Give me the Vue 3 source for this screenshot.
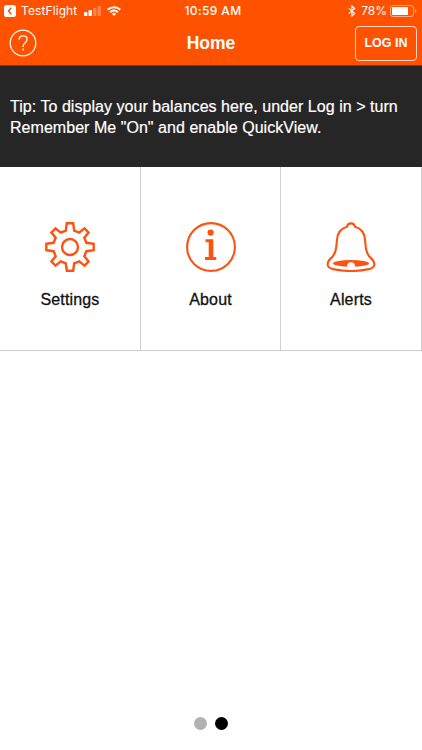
<template>
  <div class="screen">
    <header class="top">
      <div class="status-bar">
        <div class="status-left">
          <svg class="back" viewBox="0 0 12 12">
            <rect width="12" height="12" rx="2.5" fill="#fff" />
            <path d="M7.3 2.8 4.4 6l2.9 3.2" fill="none" stroke="#ff5200" stroke-width="1.4" />
          </svg>
          <span class="carrier">TestFlight</span>
          <svg class="signal" viewBox="0 0 17 10">
            <rect x="0" y="6" width="3.4" height="4" rx=".7" fill="#fff" />
            <rect x="4.5" y="4" width="3.4" height="6" rx=".7" fill="#fff" />
            <rect x="9" y="2" width="3.4" height="8" rx=".7" fill="#fff" opacity=".3" />
            <rect x="13.5" y="0" width="3.4" height="10" rx=".7" fill="#fff" opacity=".3" />
          </svg>
          <svg class="wifi" viewBox="0 0 14 10">
            <g fill="none" stroke="#fff" stroke-width="2">
              <path d="M.7 3.7a9 9 0 0 1 12.6 0" />
              <path d="M3.1 6.2a5.6 5.6 0 0 1 7.8 0" />
            </g>
            <path d="M7 10 4.9 7.8a3 3 0 0 1 4.2 0z" fill="#fff" />
          </svg>
        </div>
        <span class="clock">10:59 AM</span>
        <div class="status-right">
          <svg class="bluetooth" viewBox="0 0 8 12">
            <path d="M.8 3.3 6.7 8.5 3.9 11.1V.9l2.8 2.6L.8 8.7" fill="none" stroke="#fff" stroke-width="1.1" />
          </svg>
          <span class="percent">78%</span>
          <svg class="battery" viewBox="0 0 27 12">
            <rect x=".5" y=".5" width="23" height="11" rx="2.5" fill="none" stroke="#fff" opacity=".5" />
            <rect x="2" y="2" width="16" height="8" rx="1" fill="#fff" />
            <path d="M25 4v4c1.9-.7 1.9-3.3 0-4z" fill="#fff" opacity=".5" />
          </svg>
        </div>
      </div>

      <div class="nav-bar">
        <button class="help" aria-label="Help">
          <svg viewBox="0 0 28 28" fill="none" stroke="#fff">
            <circle cx="14" cy="14" r="12.8" stroke-width="1.2" />
            <path d="M10.1 10.6c.1-2.5 1.7-3.8 4-3.8 2.4 0 4 1.4 4 3.5 0 3.4-4 3.5-4 7v.6" stroke-width="1.3" />
            <path d="M14.1 19.6v1.8" stroke-width="1.5" />
          </svg>
        </button>
        <h1>Home</h1>
        <button class="login">LOG IN</button>
      </div>
    </header>

    <section class="tip">
      <p>Tip: To display your balances here, under Log in &gt; turn<br>Remember Me "On" and enable QuickView.</p>
    </section>

    <nav class="tiles">
      <a v-for="tile in tiles" :key="tile.name" class="tile">
        <svg v-if="tile.name === 'settings'" class="icon" viewBox="0 0 50 50">
          <g fill="none" stroke="#fb5312" stroke-width="2.4">
            <path d="M21.8 1.3h6.4l1 7.3 5 2.1 5.3-4.3 4.1 4.1-4.3 5.3 2.1 5 7.3 1v6.4l-7.3 1-2.1 5 4.3 5.3-4.1 4.1-5.3-4.3-5 2.1-1 7.3h-6.4l-1-7.3-5-2.1-5.3 4.3-4.1-4.1 4.3-5.3-2.1-5-7.3-1v-6.400l7.3-1 2.1-5-4.300-5.300 4.100-4.100 5.300 4.300 5-2.100z" />
            <circle cx="25" cy="25" r="8" />
          </g>
        </svg>
        <svg v-else-if="tile.name === 'about'" class="icon" viewBox="0 0 50 50">
          <circle cx="25" cy="25" r="23.9" fill="none" stroke="#fb5312" stroke-width="2.1" />
          <circle cx="24.6" cy="10.6" r="3.1" fill="#fb5312" />
          <path d="M19.6 17.2h7.7V35h3v3H19v-3h3.700V20.200h-3.100z" fill="#fb5312" />
        </svg>
        <svg v-else class="icon" viewBox="0 0 50 50">
          <path d="M21 4.7C22 .3 28 .3 29 4.7c6.5 1.7 9.6 6.7 10.1 13.4.5 8 1.1 13.7 5.6 17.8 2.5 2.2 3.9 4.2 3.6 7.1-.3 3-3.1 3.7-6.5 4.4-10.8 2.1-22.8 2.1-33.6 0-3.4-.7-6.2-1.4-6.5-4.4-.3-2.9 1.1-4.9 3.6-7.1 4.5-4.1 5.1-9.8 5.600-17.800C11.400 11.400 14.500 6.400 21 4.700z" fill="none" stroke="#fb5312" stroke-width="2.1" />
          <ellipse cx="25" cy="41.4" rx="18" ry="3.3" fill="#fb5312" />
          <circle cx="25" cy="44.2" r="3.9" fill="#fff" />
        </svg>
        <span class="label">{{ tile.label }}</span>
      </a>
    </nav>

    <div class="pager">
      <span v-for="n in 2" :key="n" class="dot" :class="{ active: n === page }"></span>
    </div>
  </div>
</template>

<script setup>
import { ref } from 'vue'

const page = ref(2)

const tiles = [
  { name: 'settings', label: 'Settings' },
  { name: 'about', label: 'About' },
  { name: 'alerts', label: 'Alerts' }
]
</script>

<style>
body {
  margin: 0;
  background: #fff;
}
</style>

<style scoped>
.screen {
  display: flex;
  flex-direction: column;
  height: 750px;
  background: #fff;
  font-family: "Liberation Sans", Arial, sans-serif;
  overflow: hidden;
}

.top {
  height: 66px;
  box-sizing: border-box;
  background: #ff5200;
  border-bottom: 1px solid #7a3517;
  color: #fff;
}

.status-bar {
  display: grid;
  grid-template-columns: 1fr auto 1fr;
  align-items: center;
  height: 22px;
  padding: 0 5px 0 4px;
  font-family: Inter, sans-serif;
  font-size: 12px;
  line-height: 22px;
}

.status-left,
.status-right {
  display: flex;
  align-items: center;
}

.status-right {
  justify-content: flex-end;
}

.back {
  width: 12px;
  height: 12px;
}

.carrier {
  width: 57px;
  margin-left: 5px;
  letter-spacing: 0.1px;
  white-space: nowrap;
}

.signal {
  width: 17px;
  height: 10px;
  margin-left: 6px;
}

.wifi {
  width: 14px;
  height: 10px;
  margin-left: 6px;
}

.clock {
  margin-left: 5px;
  font-weight: 500;
  letter-spacing: 0.4px;
}

.bluetooth {
  width: 8px;
  height: 12px;
  margin-right: 5px;
}

.percent {
  margin-right: 1px;
}

.battery {
  width: 27px;
  height: 12px;
  margin-left: 2px;
}

.nav-bar {
  display: grid;
  grid-template-columns: 1fr auto 1fr;
  align-items: center;
  height: 42px;
  padding: 0 5px 0 9px;
}

button {
  padding: 0;
  border: 0;
  background: none;
  color: inherit;
  font-family: inherit;
}

.help {
  width: 28px;
  height: 28px;
}

.help svg {
  display: block;
}

h1 {
  margin: 0 0 0 -4px;
  font-size: 17.5px;
  font-weight: 700;
  line-height: 22px;
}

.login {
  justify-self: end;
  width: 62px;
  height: 35px;
  border: 1px solid #ffd9c8;
  border-radius: 4px;
  font-size: 12.5px;
  font-weight: 700;
}

.tip {
  height: 101px;
  box-sizing: border-box;
  padding: 29.5px 10px 0;
  background: #262626;
  color: #fff;
}

.tip p {
  margin: 0;
  font-size: 16px;
  line-height: 21px;
  letter-spacing: 0.04px;
  white-space: nowrap;
  -webkit-text-stroke: 0.2px #fff;
}

.tiles {
  display: grid;
  grid-template-columns: 141px 140px 141px;
  height: 184px;
  box-sizing: border-box;
  border-bottom: 1px solid #ccc;
}

.tile {
  display: flex;
  flex-direction: column;
  align-items: center;
  padding-top: 54.5px;
  border-right: 1px solid #d0d0d0;
}

.icon {
  width: 50px;
  height: 50px;
}

.label {
  margin-top: 18.5px;
  color: #111;
  font-size: 16px;
  line-height: 20px;
  letter-spacing: 0.15px;
  -webkit-text-stroke: 0.3px #111;
}

.pager {
  display: flex;
  justify-content: center;
  gap: 8px;
  margin-top: auto;
  padding-bottom: 20px;
}

.dot {
  width: 13px;
  height: 13px;
  border-radius: 50%;
  background: #b2b2b2;
}

.dot.active {
  background: #000;
}
</style>
